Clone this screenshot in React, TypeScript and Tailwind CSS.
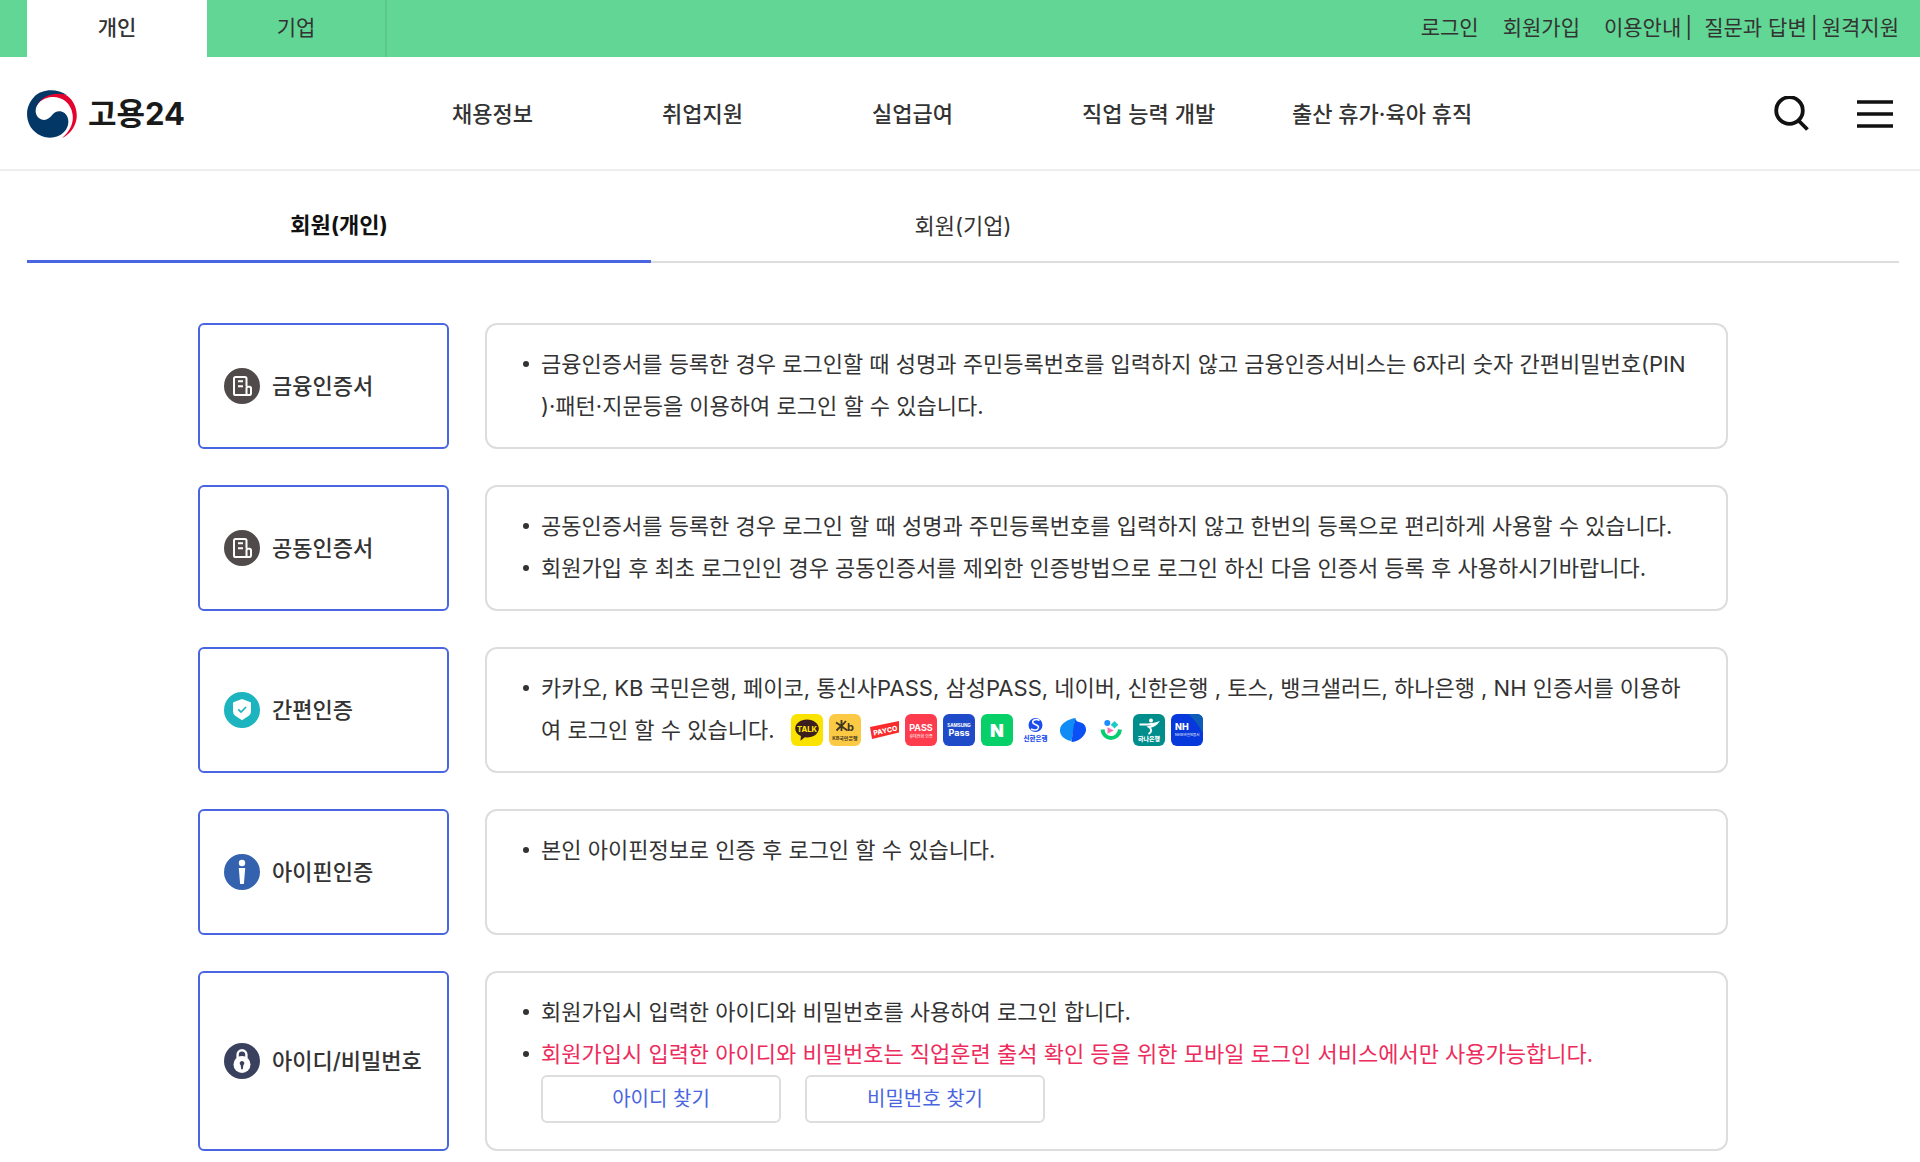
import type { ReactNode } from 'react'

type LoginMethod = {
  name: string
  icon: ReactNode
  notes: ReactNode[]
  actions?: string[]
}

const NAV_ITEMS = ['채용정보', '취업지원', '실업급여', '직업 능력 개발', '출산 휴가·육아 휴직']

function CertificateIcon() {
  return (
    <svg viewBox="0 0 36 36" className="size-9 shrink-0" aria-hidden="true">
      <circle cx="18" cy="18" r="18" fill="#504a4a" />
      <g fill="none" stroke="#fff" strokeWidth="2" strokeLinejoin="round">
        <path d="M22.5 18.5V10.5a1.6 1.6 0 0 0-1.6-1.6H11.6A1.6 1.6 0 0 0 10 10.5V25.5a1.6 1.6 0 0 0 1.6 1.6H24" />
        <path d="M14 13.3h5M14 18.2h5" />
        <path d="M22.5 27.1v-6.8q0-1.5 1.5-1.5h1.4q1.6 0 1.6 1.6v4.8q0 1.900-2.200 1.900z" />
      </g>
    </svg>
  )
}

function ShieldIcon() {
  return (
    <svg viewBox="0 0 36 36" className="size-9 shrink-0" aria-hidden="true">
      <circle cx="18" cy="18" r="18" fill="#1cb4be" />
      <path d="M18 7l8 2.9q1 .4 1 1.4v8.2q0 2.4-2.2 4.2L18 28.3l-6.8-4.6Q9 21.9 9 19.5v-8.2q0-1 1-1.4z" fill="#fff" />
      <path d="M14.3 17.4l2.700 2.600 5.100-5" fill="none" stroke="#1cb4be" strokeWidth="1.7" />
    </svg>
  )
}

function IpinIcon() {
  return (
    <svg viewBox="0 0 36 36" className="size-9 shrink-0" aria-hidden="true">
      <circle cx="18" cy="18" r="18" fill="#3462af" />
      <circle cx="18" cy="9" r="3.2" fill="#fff" />
      <path d="M14.8 14h6.4l-1.3 16h-3.8z" fill="#fff" />
    </svg>
  )
}

function LockIcon() {
  return (
    <svg viewBox="0 0 36 36" className="size-9 shrink-0" aria-hidden="true">
      <circle cx="18" cy="18" r="18" fill="#3a415f" />
      <path d="M13.6 15v-3.400a4.400 4.400 0 0 1 8.800 0V15" fill="none" stroke="#fff" strokeWidth="2.400" />
      <circle cx="18" cy="21.5" r="8.5" fill="#fff" />
      <path d="M18 18a2.300 2.300 0 0 1 1.300 4.200l-.5 4h-1.600l-.5-4a2.300 2.300 0 0 1 1.300-4.200z" fill="#3a415f" />
    </svg>
  )
}

function BrandMark() {
  return (
    <svg viewBox="0 0 50 48" className="h-12 w-[50px]" aria-hidden="true">
      <path d="M9 17C12 7 24 0 38 4.500C46 8.500 51 19 49.500 29C48 38 42 45 35 48C43 41 47 33 45.500 24C44 13 35 6.500 25 7C18 7.500 12 11 9 17z" fill="#e4032e" />
      <path d="M40 5C30 -1.500 15 -1.500 7 7C-2.500 17 -2 32 7 41C16 50 30 49.500 37 42C43 36 42.500 27 37.500 23C33.500 20 28.500 21 26 24C22.500 28.500 19 31 14.500 29.500C9 27.500 7.500 21.500 9.500 16.500C14 6.500 26 1 40 5z" fill="#033766" />
    </svg>
  )
}

function PartnerIcons() {
  return (
    <span className="mb-1 ml-4 inline-flex gap-1.5 align-middle" aria-hidden="true">
      <svg viewBox="0 0 32 32" className="size-8">
        <rect width="32" height="32" rx="6" fill="#fbe300" />
        <path d="M16 5.500c6.600 0 11.800 4 11.800 9s-5.200 9-11.800 9l-2.200-.2-4.300 3.400.4-4.600C6.500 20.500 4.200 17.800 4.200 14.500c0-5 5.200-9 11.800-9z" fill="#3b1e1e" />
        <text x="16" y="17.800" textAnchor="middle" fontSize="7.500" fontWeight="800" fill="#fbe300">TALK</text>
      </svg>
      <svg viewBox="0 0 32 32" className="size-8">
        <rect width="32" height="32" rx="6" fill="#fbc944" />
        <path d="M7 8.500l5.500 3.500L17 7M12.500 6v11M7.500 16.500l4.500-4.500 6.500 4.500" fill="none" stroke="#3f3522" strokeWidth="1.800" />
        <text x="18" y="17" fontSize="11" fontWeight="700" fill="#3f3522">b</text>
        <text x="16" y="26" textAnchor="middle" fontSize="5" fontWeight="700" fill="#3f3522">KB국민은행</text>
      </svg>
      <svg viewBox="0 0 32 32" className="size-8">
        <path d="M3 13L32 7v11.500L5 25z" fill="#f92b2b" />
        <text x="7" y="21.500" fontSize="7" fontWeight="800" fill="#fff" transform="rotate(-12 7 21.500)">PAYCO</text>
      </svg>
      <svg viewBox="0 0 32 32" className="size-8">
        <rect width="32" height="32" rx="6" fill="#ff3c4d" />
        <text x="16" y="16.500" textAnchor="middle" fontSize="9" fontWeight="700" fill="#fff">PASS</text>
        <text x="16" y="24" textAnchor="middle" fontSize="4" fill="#fff">휴대전화 인증</text>
      </svg>
      <svg viewBox="0 0 32 32" className="size-8">
        <rect width="32" height="32" rx="6" fill="#1f4bc8" />
        <text x="16" y="12.500" textAnchor="middle" fontSize="4.500" fontWeight="700" fill="#fff">SAMSUNG</text>
        <text x="16" y="22" textAnchor="middle" fontSize="9" fontWeight="700" fill="#fff">Pass</text>
      </svg>
      <svg viewBox="0 0 32 32" className="size-8">
        <rect width="32" height="32" rx="6" fill="#06d067" />
        <text x="16" y="22.500" textAnchor="middle" fontSize="18" fontWeight="900" fill="#fff">N</text>
      </svg>
      <svg viewBox="0 0 32 32" className="size-8">
        <circle cx="16.500" cy="11" r="7" fill="#1d4df0" />
        <path d="M20.500 6.500c-4-2.500-8 .3-6.500 2.500s6 1.500 5.500 4.500-4.500 3-7.500 1.500" fill="none" stroke="#fff" strokeWidth="1.500" />
        <text x="16.500" y="26.500" textAnchor="middle" fontSize="6.500" fontWeight="800" fill="#1d4df0">신한은행</text>
      </svg>
      <svg viewBox="0 0 32 32" className="size-8">
        <path d="M18.500 4L14.500 27C7 26 2.500 21 3 15.500 3.500 9.500 11 5 18.500 4z" fill="#0f8cf5" />
        <path d="M18.500 4c0 2 1 3.500 3.500 4 4.500.8 7.500 4 7 8.500C28 22.500 21 28 14.500 28l2-15.500z" fill="#0a50f5" />
      </svg>
      <svg viewBox="0 0 32 32" className="size-8">
        <circle cx="12.300" cy="9" r="3" fill="#1d8cff" />
        <path d="M19.500 7l3.800 3.800-3.800 3.800-3.800-3.800z" fill="#22c9c4" />
        <path d="M12.500 13.200l6.300 3.300-6.300 3.300z" fill="#ff6fb0" />
        <path d="M7.500 15.500c.5 5 4 8.500 8.500 8.500s8.500-3.500 9-8.500" fill="none" stroke="#06ce70" strokeWidth="4" />
      </svg>
      <svg viewBox="0 0 32 32" className="size-8">
        <rect width="32" height="32" rx="6" fill="#008e8c" />
        <circle cx="18" cy="6.500" r="2" fill="#fff" />
        <path d="M6.500 10.500c6 0 11 .5 17.500-1.500-2.500 3-4.500 3.500-8 4 3 2 3 5-.5 7" fill="none" stroke="#fff" strokeWidth="2" />
        <text x="16" y="27" textAnchor="middle" fontSize="6" fontWeight="800" fill="#fff">하나은행</text>
      </svg>
      <svg viewBox="0 0 32 32" className="size-8">
        <rect width="32" height="32" rx="6" fill="#0738dc" />
        <path d="M17 0h9a6 6 0 0 1 6 6v13c-4-7-8-13-15-19z" fill="#0c5cb8" />
        <text x="4" y="15.500" fontSize="9" fontWeight="800" fill="#fff">NH</text>
        <text x="4" y="22" fontSize="3.500" fill="#fff">NH모바일인증서</text>
      </svg>
    </span>
  )
}

const METHODS: LoginMethod[] = [
  {
    name: '금융인증서',
    icon: <CertificateIcon />,
    notes: [
      <>금융인증서를 등록한 경우 로그인할 때 성명과 주민등록번호를 입력하지 않고 금융인증서비스는 6자리 숫자 간편비밀번호(PIN<br />)·패턴·지문등을 이용하여 로그인 할 수 있습니다.</>,
    ],
  },
  {
    name: '공동인증서',
    icon: <CertificateIcon />,
    notes: [
      '공동인증서를 등록한 경우 로그인 할 때 성명과 주민등록번호를 입력하지 않고 한번의 등록으로 편리하게 사용할 수 있습니다.',
      '회원가입 후 최초 로그인인 경우 공동인증서를 제외한 인증방법으로 로그인 하신 다음 인증서 등록 후 사용하시기바랍니다.',
    ],
  },
  {
    name: '간편인증',
    icon: <ShieldIcon />,
    notes: [
      <>카카오, KB 국민은행, 페이코, 통신사PASS, 삼성PASS, 네이버, 신한은행 , 토스, 뱅크샐러드, 하나은행 , NH 인증서를 이용하<br />여 로그인 할 수 있습니다.<PartnerIcons /></>,
    ],
  },
  {
    name: '아이핀인증',
    icon: <IpinIcon />,
    notes: ['본인 아이핀정보로 인증 후 로그인 할 수 있습니다.'],
  },
  {
    name: '아이디/비밀번호',
    icon: <LockIcon />,
    notes: [
      '회원가입시 입력한 아이디와 비밀번호를 사용하여 로그인 합니다.',
      <span className="text-[#ed2b5c]">회원가입시 입력한 아이디와 비밀번호는 직업훈련 출석 확인 등을 위한 모바일 로그인 서비스에서만 사용가능합니다.</span>,
    ],
    actions: ['아이디 찾기', '비밀번호 찾기'],
  },
]

function TopBar() {
  return (
    <div className="flex h-[57px] justify-between bg-[#62d694] pr-[21px] pl-[27px] text-[21px]">
      <div className="flex">
        <button type="button" className="w-[180px] bg-white pb-0.5 font-medium">개인</button>
        <button type="button" className="w-[180px] border-r-2 border-[#5bc88a] pb-0.5">기업</button>
      </div>
      <div className="flex items-center pb-0.5">
        <a href="#" className="mr-6">로그인</a>
        <a href="#" className="mr-6">회원가입</a>
        <a href="#">이용안내</a>
        <span className="mr-3 ml-1">|</span>
        <a href="#">질문과 답변</a>
        <span className="mx-1">|</span>
        <a href="#">원격지원</a>
      </div>
    </div>
  )
}

function Header() {
  return (
    <header className="flex h-[114px] items-center border-b-2 border-[#eeeeee] pt-0.5 pr-[27px] pl-[27px]">
      <a href="#" className="flex w-[425px] items-center gap-[11px] text-[31px] font-bold text-[#1a1a1a]">
        <BrandMark />
        고용24
      </a>
      <nav className="flex flex-1 text-[22px] font-medium">
        { NAV_ITEMS.map(item => (
          <a key={ item } href="#" className="w-[210px] whitespace-nowrap">{ item }</a>
        )) }
      </nav>
      <div className="flex items-center gap-12">
        <button type="button" aria-label="검색">
          <svg viewBox="0 0 36 36" className="size-9" fill="none" stroke="#111" strokeWidth="3.8">
            <circle cx="16.5" cy="14.5" r="13.3" />
            <path d="M25.500 24.500l9 9" />
          </svg>
        </button>
        <button type="button" aria-label="전체메뉴">
          <svg viewBox="0 0 36 36" className="size-9" stroke="#111" strokeWidth="3.6">
            <path d="M0 6h36M0 18h36M0 30h36" />
          </svg>
        </button>
      </div>
    </header>
  )
}

function MethodRow({ method }: { method: LoginMethod }) {
  return (
    <div className="flex gap-9">
      <button type="button" className="flex w-[251px] shrink-0 items-center gap-3 rounded-md border-2 border-[#4a65e0] pl-6 text-[22px] font-medium whitespace-nowrap">
        { method.icon }
        { method.name }
      </button>
      <div className="min-h-[126px] flex-1 rounded-xl border-2 border-[#dddddd] pt-[18px] pb-5 pl-9">
        <ul className="text-[22px] leading-[42px]">
          { method.notes.map((note, i) => (
            <li key={ i } className="flex gap-3">
              <span className="mt-[18px] size-1.5 shrink-0 rounded-full bg-[#333]"></span>
              <div>{ note }</div>
            </li>
          )) }
        </ul>
        { method.actions && (
          <div className="mb-1.5 flex gap-6 pl-[18px]">
            { method.actions.map(action => (
              <button key={ action } type="button" className="h-12 w-60 rounded-md border-2 border-[#dddddd] text-[20px] text-[#4a65e0]">{ action }</button>
            )) }
          </div>
        ) }
      </div>
    </div>
  )
}

export default function App() {
  return (
    <div className="bg-white font-['Inter','Noto_Sans_CJK_KR',sans-serif] text-[#333]">
      <TopBar />
      <Header />
      <main className="pr-[21px] pl-[27px]">
        <div className="grid h-[92px] grid-cols-3 text-[22px]">
          <button type="button" className="border-b-3 border-[#4a65e0] pt-5 font-bold text-[#111]">회원(개인)</button>
          <button type="button" className="border-b-2 border-[#dddddd] pt-5">회원(기업)</button>
          <div className="border-b-2 border-[#dddddd]"></div>
        </div>
        <section className="mx-auto flex max-w-[1530px] flex-col gap-9 pt-[60px] pb-[11px]">
          { METHODS.map(method => (
            <MethodRow key={ method.name } method={ method } />
          )) }
        </section>
      </main>
    </div>
  )
}
